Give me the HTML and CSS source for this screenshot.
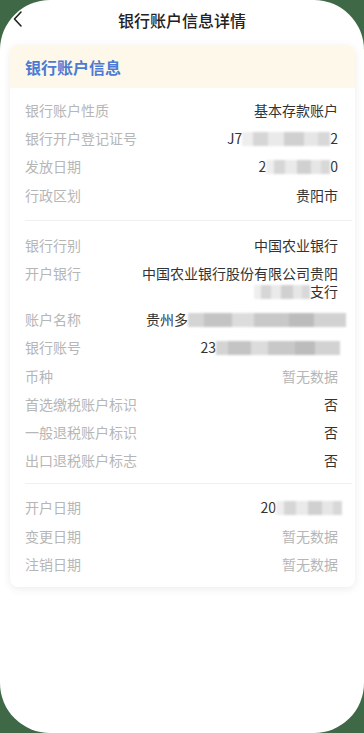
FILE: index.html
```html
<!DOCTYPE html>
<html lang="zh-CN">
<head>
<meta charset="utf-8">
<title>银行账户信息详情</title>
<link rel="stylesheet" href="styles.css">
</head>
<body>
<div class="screen">
  <header class="nav">
    <svg class="back" width="12" height="18" viewBox="0 0 12 18"><path d="M9 2 L2.5 9 L9 16" fill="none" stroke="#222" stroke-width="1.6" stroke-linecap="round" stroke-linejoin="round"/></svg>
    <h1 class="nav-title">银行账户信息详情</h1>
  </header>
  <div class="card">
    <div class="card-head">银行账户信息</div>
    <div class="section s1">
      <div class="row"><span class="label">银行账户性质</span><span class="value">基本存款账户</span></div>
      <div class="row"><span class="label">银行开户登记证号</span><span class="value">J7<span class="mask m-w88"></span>2</span></div>
      <div class="row"><span class="label">发放日期</span><span class="value">2<span class="mask m-w64"></span>0</span></div>
      <div class="row"><span class="label">行政区划</span><span class="value">贵阳市</span></div>
    </div>
    <div class="divider"></div>
    <div class="section s2">
      <div class="row"><span class="label">银行行别</span><span class="value">中国农业银行</span></div>
      <div class="row"><span class="label">开户银行</span><span class="value wrap">中国农业银行股份有限公司贵阳<br><span class="mask m-w56"></span>支行</span></div>
      <div class="row"><span class="label">账户名称</span><span class="value over">贵州多<span class="mask m-w158 m-dark"></span></span></div>
      <div class="row"><span class="label">银行账号</span><span class="value over2">23<span class="mask m-w124 m-dark"></span></span></div>
      <div class="row"><span class="label">币种</span><span class="value empty">暂无数据</span></div>
      <div class="row"><span class="label">首选缴税账户标识</span><span class="value">否</span></div>
      <div class="row"><span class="label">一般退税账户标识</span><span class="value">否</span></div>
      <div class="row"><span class="label">出口退税账户标志</span><span class="value">否</span></div>
    </div>
    <div class="divider"></div>
    <div class="section s3">
      <div class="row"><span class="label">开户日期</span><span class="value over">20<span class="mask m-w66"></span></span></div>
      <div class="row"><span class="label">变更日期</span><span class="value empty">暂无数据</span></div>
      <div class="row"><span class="label">注销日期</span><span class="value empty">暂无数据</span></div>
    </div>
  </div>
</div>
</body>
</html>
```
FILE: styles.css
```css
html, body {
  margin: 0;
  padding: 0;
}
body {
  background: #3e6846;
  font-family: "Noto Sans CJK SC", "Noto Sans", "Liberation Sans", sans-serif;
}
.screen {
  width: 364px;
  height: 733px;
  background: #ffffff;
  border-radius: 50px;
  overflow: hidden;
}
.nav {
  height: 40px;
  display: flex;
  align-items: center;
  justify-content: center;
  position: relative;
}
.back {
  position: absolute;
  left: 12px;
  top: 10px;
}
.nav-title {
  margin: 0;
  font-size: 16px;
  font-weight: 500;
  color: #222;
  line-height: 20px;
}
.card {
  margin: 5px 9px 0 10px;
  background: #fff;
  border-radius: 8px;
  box-shadow: 0 2px 8px rgba(0, 0, 0, 0.08);
  overflow: hidden;
}
.card-head {
  height: 43px;
  display: flex;
  align-items: center;
  padding-left: 15px;
  background: #fdf8ea;
  color: #4c7bd3;
  font-size: 16px;
  font-weight: 700;
}
.section {
  padding: 0 17px 0 15px;
}
.s1 { padding-top: 8px; padding-bottom: 11px; }
.s2 { padding-top: 10px; padding-bottom: 9px; }
.s3 { padding-top: 9px; padding-bottom: 9px; }
.divider {
  height: 1px;
  background: #f0f0f0;
  margin: 0 3px 0 15px;
}
.row {
  display: flex;
  justify-content: space-between;
  align-items: flex-start;
  padding: 5.1px 0;
  font-size: 14px;
  line-height: 18px;
}
.label {
  color: #b6b6b6;
  white-space: nowrap;
}
.value {
  color: #333;
  text-align: right;
  max-width: 196px;
  white-space: nowrap;
}
.value.wrap {
  white-space: normal;
}
.value.over {
  margin-right: -4px;
}
.value.over2 {
  margin-right: -2px;
}
.value.empty {
  color: #b6b6b6;
}
.mask {
  display: inline-block;
  height: 14px;
  vertical-align: -2px;
  background:
    linear-gradient(90deg, #eeeeee 0 12%, #d6d6d6 12% 30%, #eaeaea 30% 48%, #d0d0d0 48% 70%, #e6e6e6 70% 86%, #d8d8d8 86% 100%);
  filter: blur(1.2px);
}
.m-dark {
  background:
    linear-gradient(90deg, #d4d4d4 0 10%, #c4c4c4 10% 28%, #dcdcdc 28% 42%, #c8c8c8 42% 64%, #bcbcbc 64% 80%, #d2d2d2 80% 100%);
}
.m-w88 { width: 88px; }
.m-w64 { width: 64px; }
.m-w56 { width: 56px; }
.m-w158 { width: 158px; }
.m-w124 { width: 124px; }
.m-w66 { width: 66px; }
```
